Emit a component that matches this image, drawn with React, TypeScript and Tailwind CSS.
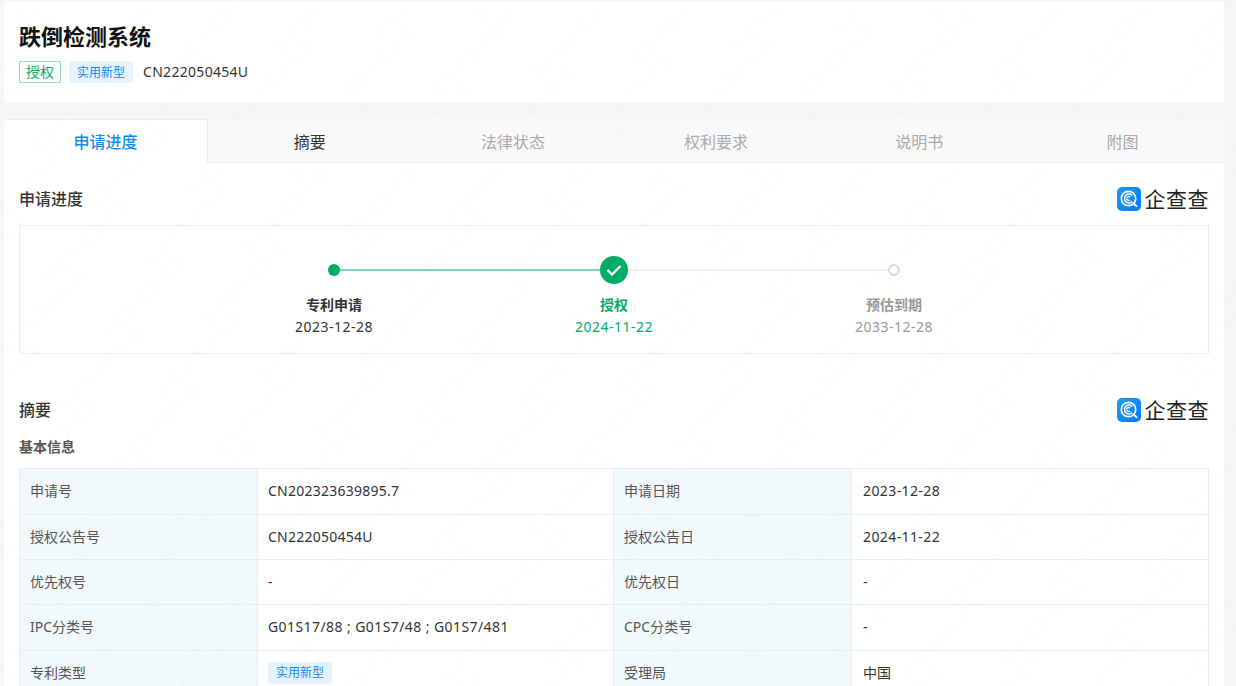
import React from 'react';

const font = { fontFamily: '"Noto Sans", "Noto Sans CJK SC", sans-serif' };

const tabs = ['申请进度', '摘要', '法律状态', '权利要求', '说明书', '附图'];

const rows: [string, React.ReactNode, string, React.ReactNode, string, string][] = [
  ['申请号', <Num key="a" w="tracking-[0.25px]">CN202323639895.7</Num>, '申请日期', <Num key="b" w="tracking-[0.4px]">2023-12-28</Num>, 'h-[46px]', 'pb-[1px]'],
  ['授权公告号', <Num key="a" w="tracking-[0.25px]">CN222050454U</Num>, '授权公告日', <Num key="b" w="tracking-[0.4px]">2024-11-22</Num>, 'h-[45px]', ''],
  ['优先权号', '-', '优先权日', '-', 'h-[45px]', ''],
  ['IPC分类号', <Num key="a" w="tracking-[0.42px]">G01S17/88 ; G01S7/48 ; G01S7/481</Num>, 'CPC分类号', '-', 'h-[46px]', 'pb-[1px]'],
  ['专利类型', <TypeTag key="tag" />, '受理局', '中国', 'h-[46px]', 'pb-[1px]'],
];

// 水印: 一个图块里四个错开的文字, 上下左右各补一份防止被图块裁掉
const markSpots: { x: number; y: number }[] = [];
for (let k = 0; k < 4; k++) {
  for (const dx of [-325.2, 0, 325.2]) {
    for (const dy of [-80.6, 0, 80.6]) {
      markSpots.push({ x: 57.3 + 81.3 * k + dx, y: 28.8 - 20.15 * k + dy });
    }
  }
}

function Num({ w, children }: { w: string; children: React.ReactNode }) {
  return <span className={w}>{children}</span>;
}

function TypeTag() {
  return (
    <span className="inline-flex h-[22px] w-16 items-center justify-center rounded-[2px] bg-[#e6f2fd] text-xs text-[#128bed]">
      实用新型
    </span>
  );
}

function Logo() {
  return (
    <div className="flex h-6 items-center gap-1">
      <svg width="24" height="24" viewBox="0 0 24 24">
        <defs>
          <linearGradient id="qcc" x1="0" y1="0" x2="1" y2="1">
            <stop offset="0" stopColor="#1a9bf7" />
            <stop offset="1" stopColor="#0a7af2" />
          </linearGradient>
        </defs>
        <rect width="24" height="24" rx="5" fill="url(#qcc)" />
        <circle cx="11.5" cy="11.5" r="7.2" fill="none" stroke="#fff" strokeWidth="1.7" />
        <path d="M15.2 14.4A4.4 4.4 0 1 1 15.2 8.6" fill="none" stroke="#fff" strokeWidth="1.5" />
        <path d="M13.2 12.9A2 2 0 1 1 13.2 10.1" fill="none" stroke="#fff" strokeWidth="1.3" />
        <path d="M16 16l4 3.6" stroke="#fff" strokeWidth="1.8" />
      </svg>
      <span className="text-[21px] leading-6 font-normal tracking-[0.5px] text-[#222]">企查查</span>
    </div>
  );
}

function SectionHead({ title }: { title: string }) {
  return (
    <div className="flex h-6 items-center justify-between">
      <h2 className="text-base leading-6 font-medium text-[#333]">{title}</h2>
      <Logo />
    </div>
  );
}

function Step({ title, date, color }: { title: string; date: string; color: string }) {
  return (
    <div className={`flex w-[280px] flex-col items-center ${color}`}>
      <div className="text-sm leading-5 font-bold">{title}</div>
      <div className="mt-[2px] text-sm leading-5 tracking-[0.5px]">{date}</div>
    </div>
  );
}

const App: React.FC = () => {
  return (
    <div className="relative h-[686px] overflow-hidden bg-[#f6f6f6] pt-[1px] pl-1 pr-3" style={font}>
      {/* 标题 */}
      <div className="h-[102px] rounded-[4px] bg-white px-[15px] pt-[19px]">
        <h1 className="text-[22px] leading-8 font-bold text-[#111]">跌倒检测系统</h1>
        <div className="mt-[9px] flex h-[22px] items-center">
          <span className="flex h-[22px] w-[42px] items-center justify-center rounded-[2px] border border-[#8fdcb6] text-sm text-[#00ad65]">授权</span>
          <span className="ml-2 flex h-[22px] w-16 items-center justify-center rounded-[2px] bg-[#e6f2fd] pt-[1px] text-xs text-[#128bed]">实用新型</span>
          <span className="ml-[10px] text-sm tracking-[0.3px] text-[#333]">CN222050454U</span>
        </div>
      </div>

      <div className="mt-4 rounded-t-[4px] bg-white">
        {/* Tabs */}
        <div className="flex h-11 bg-[#f9f9f9]">
          {tabs.map((t, i) => (
            <div
              key={t}
              className={`flex flex-1 items-center justify-center text-base ${
                i === 0
                  ? 'rounded-tl-[4px] border-t border-r border-[#eeeeee] bg-white pt-[1px] font-medium text-[#128bed]'
                  : i === 1
                    ? 'border-b border-[#eeeeee] pt-[2px] text-[#333]'
                    : 'border-b border-[#eeeeee] pt-[2px] text-[#aaaaaa]'
              }`}
            >
              {t}
            </div>
          ))}
        </div>

        <div className="px-[15px] pt-6">
          <SectionHead title="申请进度" />

          <div className="mt-[14px] flex h-[129px] flex-col items-center border border-[#eeeeee] pt-[30px]">
            <div className="flex h-7 w-[572px] items-center">
              <span className="h-3 w-3 shrink-0 rounded-full bg-[#00ad65]" />
              <span className="h-[2px] flex-1 bg-[#80d6b2]" />
              <span className="flex h-7 w-7 shrink-0 items-center justify-center rounded-full bg-[#00ad65]">
                <svg width="16" height="12" viewBox="0 0 16 12">
                  <path d="M1.5 6l4.5 4.5 8.5-8.5" fill="none" stroke="#fff" strokeWidth="2.4" />
                </svg>
              </span>
              <span className="h-[2px] flex-1 bg-[#f0f0f0]" />
              <span className="h-3 w-3 shrink-0 rounded-full border-2 border-[#d8d8d8] bg-white" />
            </div>
            <div className="mt-[11px] flex">
              <Step title="专利申请" date="2023-12-28" color="text-[#333]" />
              <Step title="授权" date="2024-11-22" color="text-[#00ad65]" />
              <Step title="预估到期" date="2033-12-28" color="text-[#999]" />
            </div>
          </div>

          <div className="mt-11">
            <SectionHead title="摘要" />
          </div>
          <div className="mt-[15px] text-sm leading-5 font-bold text-[#555]">基本信息</div>

          <div className="mt-[11px] border-t border-l border-[#e4eef6] text-sm text-[#333]">
            {rows.map(([a, b, c, d, h, pad]) => (
              <div key={a} className={`grid grid-cols-[238px_356px_238px_1fr] border-b border-[#e4eef6] ${h}`}>
                <div className={`flex items-center border-r border-[#e4eef6] bg-[#f2f9fc] px-[10px] text-[#555] ${pad}`}>{a}</div>
                <div className={`flex items-center border-r border-[#e4eef6] px-[10px] ${pad}`}>{b}</div>
                <div className={`flex items-center border-r border-[#e4eef6] bg-[#f2f9fc] pl-[10px] text-[#555] ${pad}`}>{c}</div>
                <div className={`flex items-center border-r border-[#e4eef6] pl-[11px] ${pad}`}>{d}</div>
              </div>
            ))}
          </div>
        </div>
      </div>

      {/* 水印 */}
      <svg className="pointer-events-none absolute inset-0" width="1236" height="686" aria-hidden="true">
        <defs>
          <pattern id="wm" width="325.2" height="80.6" patternUnits="userSpaceOnUse" patternTransform="rotate(-45)">
            {markSpots.map((m) => (
              <text
                key={`${m.x}-${m.y}`}
                x={m.x}
                y={m.y}
                textAnchor="middle"
                dominantBaseline="central"
                fill="#000"
                fillOpacity="0.012"
                className="text-sm tracking-[8px]"
              >
                EEV8XKB
              </text>
            ))}
          </pattern>
        </defs>
        <rect width="1236" height="686" fill="url(#wm)" />
      </svg>
    </div>
  );
};

export default App;
